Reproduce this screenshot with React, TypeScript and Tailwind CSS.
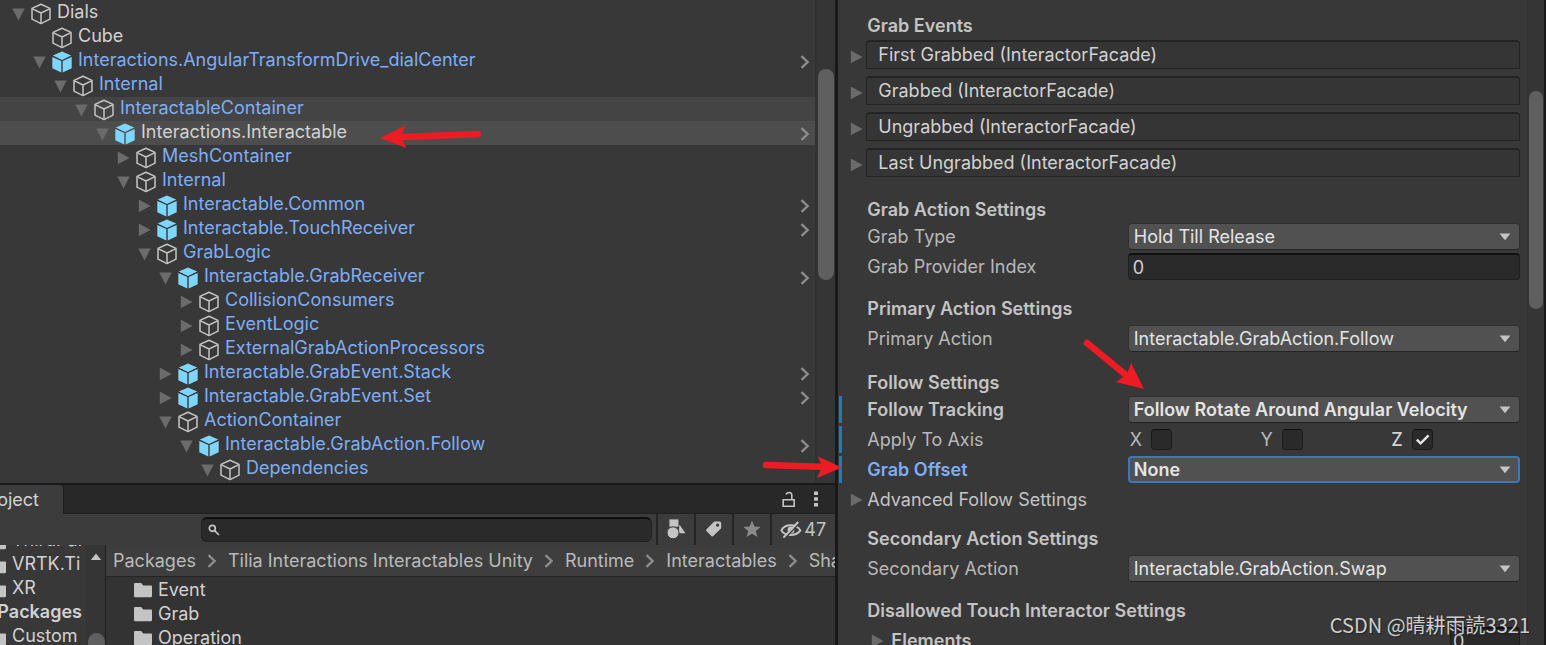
import React from 'react';

type TreeNode = {
	name: string;
	depth: number;
	icon: 'cube' | 'prefab';
	fold?: 'open' | 'closed';
	plain?: boolean;
	enter?: boolean;
	row?: string;
};

const nodes: TreeNode[] = [
	{ name: 'Dials', depth: 0, icon: 'cube', fold: 'open', plain: true },
	{ name: 'Cube', depth: 1, icon: 'cube', plain: true },
	{ name: 'Interactions.AngularTransformDrive_dialCenter', depth: 1, icon: 'prefab', fold: 'open', enter: true },
	{ name: 'Internal', depth: 2, icon: 'cube', fold: 'open' },
	{ name: 'InteractableContainer', depth: 3, icon: 'cube', fold: 'open', row: 'bg-[#444444]' },
	{ name: 'Interactions.Interactable', depth: 4, icon: 'prefab', fold: 'open', plain: true, enter: true, row: 'bg-[#4d4d4d]' },
	{ name: 'MeshContainer', depth: 5, icon: 'cube', fold: 'closed' },
	{ name: 'Internal', depth: 5, icon: 'cube', fold: 'open' },
	{ name: 'Interactable.Common', depth: 6, icon: 'prefab', fold: 'closed', enter: true },
	{ name: 'Interactable.TouchReceiver', depth: 6, icon: 'prefab', fold: 'closed', enter: true },
	{ name: 'GrabLogic', depth: 6, icon: 'cube', fold: 'open' },
	{ name: 'Interactable.GrabReceiver', depth: 7, icon: 'prefab', fold: 'open', enter: true },
	{ name: 'CollisionConsumers', depth: 8, icon: 'cube', fold: 'closed' },
	{ name: 'EventLogic', depth: 8, icon: 'cube', fold: 'closed' },
	{ name: 'ExternalGrabActionProcessors', depth: 8, icon: 'cube', fold: 'closed' },
	{ name: 'Interactable.GrabEvent.Stack', depth: 7, icon: 'prefab', fold: 'closed', enter: true },
	{ name: 'Interactable.GrabEvent.Set', depth: 7, icon: 'prefab', fold: 'closed', enter: true },
	{ name: 'ActionContainer', depth: 7, icon: 'cube', fold: 'open' },
	{ name: 'Interactable.GrabAction.Follow', depth: 8, icon: 'prefab', fold: 'open', enter: true },
	{ name: 'Dependencies', depth: 9, icon: 'cube', fold: 'open' },
];

const FoldIcon = ({ open }: { open?: boolean }) => (
	<svg width="13" height="14" viewBox="0 0 13 14" fill="#6b6b6b" className="block">
		{open ? <path d="M0.3 1.5h12.4L6.5 13.5z" /> : <path d="M0.8 0.6v12.6L12.6 6.9z" />}
	</svg>
);

const CubeIcon = () => (
	<svg width="20" height="22" viewBox="0 0 20 22" fill="none" stroke="#c4c4c4" strokeWidth="1.5" strokeLinejoin="round" className="block shrink-0">
		<path d="M10 1.2L19 5.4v10.8L10 20.6L1 16.2V5.4z" />
		<path d="M1 5.6L10 10l9-4.4M10 10v10.4" />
	</svg>
);

const PrefabIcon = () => (
	<svg width="20" height="22" viewBox="0 0 20 22" fill="#7fd6fd" className="block shrink-0">
		<path d="M10 0.6L19.2 4.6L10 8.9L0.8 4.6z" />
		<path d="M0.3 5.9L9.3 10.1v11.3L0.3 17.3z" />
		<path d="M19.7 5.9L10.7 10.1v11.3l9-4.1z" />
	</svg>
);

const Chevron = () => (
	<svg width="10" height="14" viewBox="0 0 10 14" fill="none" stroke="#8c8c8c" strokeWidth="2.4" className="block shrink-0">
		<path d="M1.5 1.2L7.6 7L1.5 12.8" />
	</svg>
);

const FolderIcon = () => (
	<svg width="18" height="16" viewBox="0 0 18 16" fill="#c4c4c4" className="block shrink-0">
		<path d="M1 1h6.2l2 2.500H17a1 1 0 0 1 1 1V14a1.2 1.2 0 0 1-1.2 1.2H1.2A1.2 1.2 0 0 1 0 14V2a1 1 0 0 1 1-1z" />
	</svg>
);

const Hierarchy = () => (
	<div className="flex shrink-0 border-b-2 border-[#191919]">
		<ul className="min-w-0 flex-1 pt-px pb-0.5">
			{nodes.map((node, i) => (
				<li
					key={i}
					className={`flex h-6 items-center pr-[5px] ${node.row ?? ''}`}
					style={{ paddingLeft: 12 + node.depth * 21 }}
				>
					<button aria-label={`Toggle ${node.name}`} className="mr-1.5 w-[13px] shrink-0 pt-0.5">
						{node.fold && <FoldIcon open={node.fold === 'open'} />}
					</button>
					<span className="pt-px">{node.icon === 'cube' ? <CubeIcon /> : <PrefabIcon />}</span>
					<span className={`ml-1.5 flex-1 pb-0.5 whitespace-nowrap ${node.plain ? 'text-[#d2d2d2]' : 'text-[#7fadf5]'}`}>
						{node.name}
					</span>
					{node.enter && (
						<button aria-label={`Open ${node.name}`} className="pt-0.5">
							<Chevron />
						</button>
					)}
				</li>
			))}
		</ul>
		<div className="w-5 border-l-2 border-[#323232] bg-[#353535] px-px pt-[69px]">
			<div className="h-[211px] rounded-full bg-[#5f5f5f]" />
		</div>
	</div>
);

const ToolButton = ({ label, children }: { label: string; children: React.ReactNode }) => (
	<button aria-label={label} className="flex w-[38px] items-center justify-center border-l-2 border-[#242424] pb-0.5">
		{children}
	</button>
);

const crumbs = ['Packages', 'Tilia Interactions Interactables Unity', 'Runtime', 'Interactables', 'Sha'];
const treeFolders = ['ThirdPar', 'VRTK.Ti', 'XR', 'Packages', 'Custom'];
const folders = ['Event', 'Grab', 'Operation'];

const Project = () => (
	<div className="flex min-h-0 flex-1 flex-col overflow-hidden">
		{/* Tab bar */}
		<div className="flex h-[29px] shrink-0 bg-[#282828]">
			<div className="flex w-[63px] items-center justify-end overflow-hidden rounded-tr bg-[#3c3c3c] pr-6 text-[#d2d2d2]">
				<span>Project</span>
			</div>
			<div className="flex flex-1 items-center justify-end gap-[18px] border-b border-l border-[#1f1f1f] pr-[17px]">
				<button aria-label="Lock">
					<svg width="14" height="17" viewBox="0 0 14 17" fill="none" stroke="#c4c4c4" strokeWidth="1.6" className="block">
						<path d="M1.2 8.8h11v6.4H1.2zM9.8 8.6V4.2C9.8 0.6 5 0.8 4.2 3.6" />
					</svg>
				</button>
				<button aria-label="More">
					<svg width="4" height="16" viewBox="0 0 4 16" fill="#c4c4c4" className="block">
						<path d="M0 0.5h4v3.4H0zM0 6.3h4v3.4H0zM0 12.1h4v3.4H0z" />
					</svg>
				</button>
			</div>
		</div>

		{/* Search and filters */}
		<div className="flex h-[31px] shrink-0 bg-[#3c3c3c] pl-[201px]">
			<label className="my-[3px] flex min-w-0 flex-1 items-center rounded-md border border-t-2 border-[#202020] border-t-[#101010] bg-[#2a2a2a] pl-1.5">
				<svg width="12" height="12" viewBox="0 0 12 12" fill="none" stroke="#c4c4c4" strokeWidth="1.7">
					<circle cx="4.3" cy="4.3" r="3" />
					<path d="M6.6 6.6L11 11" />
				</svg>
				<input type="text" aria-label="Search assets" className="min-w-0 flex-1 bg-transparent px-1 text-[#d2d2d2] outline-none" />
			</label>
			<div className="ml-1 flex">
				<ToolButton label="Filter by type">
					<svg width="20" height="20" viewBox="0 0 20 20" fill="#c4c4c4">
						<path d="M3.4 0.4h9v7.4h-9z" />
						<path d="M13.4 5.6L19.4 14.2h-6.6z" />
						<circle cx="7" cy="13.8" r="6" stroke="#3c3c3c" strokeWidth="1" />
					</svg>
				</ToolButton>
				<ToolButton label="Filter by label">
					<svg width="18" height="18" viewBox="0 0 18 18" fill="#c4c4c4">
						<path fillRule="evenodd" d="M9.2 1.6h5.4a1.6 1.6 0 0 1 1.6 1.6v5L8 16.2a1 1 0 0 1-1.4 0L1.4 11a1 1 0 0 1 0-1.4zM12.6 3.6a1.6 1.6 0 1 0 0.01 0z" />
					</svg>
				</ToolButton>
				<ToolButton label="Favorites">
					<svg width="18" height="18" viewBox="0 0 18 18" fill="#8a8a8a">
						<path d="M9 0.6l2.4 5.8 6.2 0.5-4.8 4 1.6 6.2L9 13.8l-5.4 3.3 1.6-6.2-4.8-4 6.2-0.5z" />
					</svg>
				</ToolButton>
				<button aria-label="Hidden packages" className="flex w-[65px] items-center gap-0.5 border-l-2 border-[#242424] pl-2 text-[#c4c4c4]">
					<svg width="22" height="18" viewBox="0 0 22 18" fill="none" stroke="#c4c4c4" strokeWidth="2" className="shrink-0">
						<path d="M1.4 9.4C4.6 2.6 16.4 2.6 20.4 9.4C16.4 15.4 4.6 15.4 1.4 9.4z" />
						<circle cx="11" cy="9" r="3.4" fill="#c4c4c4" stroke="none" />
						<path d="M4.6 17.6L19.6 2" stroke="#3c3c3c" strokeWidth="1.6" />
						<path d="M3.4 16.6L18.2 1" />
					</svg>
					<span>47</span>
				</button>
			</div>
		</div>

		<div className="flex min-h-0 flex-1">
			{/* Folder tree */}
			<div className="flex w-[106px] shrink-0 overflow-hidden border-r border-[#1f1f1f] bg-[#383838]">
				<ul className="-mt-[17px] w-[82px] overflow-hidden text-[#d2d2d2]">
					{treeFolders.map((name) =>
						name === 'Packages' ? (
							<li key={name} className="flex h-6 items-center justify-end font-semibold">{name}</li>
						) : (
							<li key={name} className="flex h-6 items-center">
								<span className="flex w-1.5 shrink-0 justify-end overflow-hidden pt-1"><FolderIcon /></span>
								<span className="pl-1.5 whitespace-nowrap">{name}</span>
							</li>
						),
					)}
				</ul>
				<div className="ml-auto flex w-[19px] flex-col justify-between bg-[#353535] pt-2 pl-0.5">
					<svg width="16" height="8" viewBox="0 0 16 8" fill="#c4c4c4">
						<path d="M8 0.4L13.2 7H2.8z" />
					</svg>
					<div className="h-3 rounded-t-full bg-[#5f5f5f]" />
				</div>
			</div>

			{/* Folder contents */}
			<div className="flex min-w-0 flex-1 flex-col overflow-hidden bg-[#333333]">
				<nav className="flex h-8 shrink-0 items-center gap-[11px] border-b border-[#242424] bg-[#3e3e3e] pl-[7px] text-[#bababa]">
					{crumbs.map((crumb, i) => (
						<React.Fragment key={crumb}>
							{i > 0 && <Chevron />}
							<a href="#" className="whitespace-nowrap">{crumb}</a>
						</React.Fragment>
					))}
				</nav>
				<ul className="pt-px pl-7 text-[#d2d2d2]">
					{folders.map((name) => (
						<li key={name} className="flex h-6 items-center gap-1.5">
							<FolderIcon />
							{name}
						</li>
					))}
				</ul>
			</div>
		</div>
	</div>
);

const Row = ({ id, label, tone = 'text-[#b8b8b8]', overridden, children }: {
	id?: string;
	label: string;
	tone?: string;
	overridden?: boolean;
	children?: React.ReactNode;
}) => (
	<div className="flex h-[30px] items-start pt-px">
		<div className="flex w-7 shrink-0 pl-px">
			{overridden && <div className="h-[27px] w-[3px] bg-[#1380c3]" />}
		</div>
		<div className="grid min-w-0 flex-1 grid-cols-[2fr_3fr] items-start">
			<label htmlFor={id} className={`pl-px leading-7 ${tone}`}>{label}</label>
			{children}
		</div>
	</div>
);

const Select = ({ id, value, bold, focused }: { id: string; value: string; bold?: boolean; focused?: boolean }) => (
	<div className="relative">
		<select
			id={id}
			className={`block h-[27px] w-full appearance-none rounded bg-[#515151] text-[#e4e4e4] outline-none
				${bold ? 'font-semibold' : ''}
				${focused ? 'border-2 border-[#3a79bb] pl-1' : 'border border-[#303030] border-b-[#242424] pl-[5px]'}`}
		>
			<option>{value}</option>
		</select>
		<svg width="12" height="8" viewBox="0 0 12 8" fill="#c4c4c4" className="pointer-events-none absolute top-2.5 right-[9px]">
			<path d="M0.6 0.6h10.800L6 7.2z" />
		</svg>
	</div>
);

const Heading = ({ className, children }: { className: string; children: React.ReactNode }) => (
	<h2 className={`flex items-center pl-[29px] font-semibold text-[#c4c4c4] ${className}`}>{children}</h2>
);

const Axis = ({ name, checked }: { name: string; checked?: boolean }) => (
	<label className={`flex h-[27px] items-center ${checked ? 'font-medium text-[#d2d2d2]' : ''}`}>
		<span className="w-[23px] pl-0.5">{name}</span>
		<span className="relative">
			<input
				type="checkbox"
				defaultChecked={checked}
				className="peer block h-[21px] w-[21px] appearance-none rounded border border-[#1c1c1c] border-t-[#101010] bg-[#2a2a2a]"
			/>
			<svg
				width="21"
				height="21"
				viewBox="0 0 21 21"
				fill="none"
				stroke="#e4e4e4"
				strokeWidth="2.4"
				className="pointer-events-none absolute inset-0 hidden peer-checked:block"
			>
				<path d="M4.8 10.6l3.8 3.8l8-8" />
			</svg>
		</span>
	</label>
);

const events = ['First Grabbed', 'Grabbed', 'Ungrabbed', 'Last Ungrabbed'];

const Inspector = () => (
	<div className="flex min-w-0 flex-[708] overflow-hidden border-r-2 border-[#191919]">
		<div className="min-w-0 flex-1 pt-[11px] pr-[7px]">
			<Heading className="h-[29px]">Grab Events</Heading>
			<div className="space-y-[7px]">
				{events.map((name) => (
					<div key={name} className="flex">
						<button aria-label={`Toggle ${name}`} className="flex w-7 shrink-0 items-center justify-end pt-1 pr-[3px]">
							<FoldIcon />
						</button>
						<div className="flex h-[29px] flex-1 items-center rounded-t border border-t-2 border-[#242424] bg-[#353535] pl-[11px] text-[#d2d2d2]">
							{name} (InteractorFacade)
						</div>
					</div>
				))}
			</div>

			<Heading className="mt-[21px] h-6">Grab Action Settings</Heading>
			<Row id="grab-type" label="Grab Type">
				<Select id="grab-type" value="Hold Till Release" />
			</Row>
			<Row id="grab-index" label="Grab Provider Index">
				<input
					id="grab-index"
					type="text"
					defaultValue="0"
					className="h-[27px] w-full rounded border border-t-2 border-[#202020] border-t-[#101010] bg-[#2a2a2a] px-1 text-[#d2d2d2] outline-none"
				/>
			</Row>

			<Heading className="mt-3 h-[30px]">Primary Action Settings</Heading>
			<Row id="primary" label="Primary Action">
				<Select id="primary" value="Interactable.GrabAction.Follow" />
			</Row>

			<Heading className="mt-[17px] h-6">Follow Settings</Heading>
			<Row id="tracking" label="Follow Tracking" tone="font-semibold text-[#c4c4c4]" overridden>
				<Select id="tracking" value="Follow Rotate Around Angular Velocity" bold />
			</Row>
			<Row label="Apply To Axis" overridden>
				<div className="grid grid-cols-3 text-[#b8b8b8]">
					<Axis name="X" />
					<Axis name="Y" />
					<Axis name="Z" checked />
				</div>
			</Row>
			<Row id="offset" label="Grab Offset" tone="font-semibold text-[#7fadf5]" overridden>
				<Select id="offset" value="None" bold focused />
			</Row>
			<button className="flex h-[30px] items-center text-[#c4c4c4]">
				<span className="mr-px flex w-7 justify-end pr-[3px]"><FoldIcon /></span>
				Advanced Follow Settings
			</button>

			<Heading className="mt-[9px] h-[30px]">Secondary Action Settings</Heading>
			<Row id="secondary" label="Secondary Action">
				<Select id="secondary" value="Interactable.GrabAction.Swap" />
			</Row>

			<Heading className="mt-3 h-[30px]">Disallowed Touch Interactor Settings</Heading>
			<div className="flex h-[30px] items-start justify-between pt-px pl-[33px]">
				<button className="flex items-center gap-[7px] font-semibold text-[#c4c4c4] leading-7">
					<FoldIcon />
					Elements
				</button>
				<input
					type="text"
					aria-label="Element count"
					defaultValue="0"
					className="h-[27px] w-[70px] rounded border border-t-2 border-[#202020] border-t-[#101010] bg-[#2a2a2a] px-0.5 text-[#d2d2d2] outline-none"
				/>
			</div>
		</div>
		<div className="w-[17px] shrink-0 border-l border-[#303030] bg-[#353535] px-px pt-[91px]">
			<div className="h-[218px] rounded-full bg-[#5f5f5f]" />
		</div>
	</div>
);

const Annotations = () => (
	<svg className="pointer-events-none absolute inset-0 h-full w-full" fill="#ed1c24" stroke="#ed1c24" strokeLinecap="round">
		<path d="M398 137.200L478 134" strokeWidth="6.500" />
		<path d="M380 138l25.500-12.500l-5 11.500l6 11z" stroke="none" />
		<path d="M1087 343L1126 375" strokeWidth="6.500" />
		<path d="M1144 389l-13-26l-4 11l-11 8z" stroke="none" />
		<path d="M766 465L822 466.800" strokeWidth="6.500" />
		<path d="M842 467.500l-24-11l4 10.500l-5 11z" stroke="none" />
	</svg>
);

export default function App() {
	return (
		<div className="relative flex h-screen overflow-hidden bg-[#383838] font-[Inter,sans-serif] text-[18px] leading-6">
			<div className="flex min-w-0 flex-[838] flex-col border-r-[3px] border-[#191919]">
				<Hierarchy />
				<Project />
			</div>
			<Inspector />
			<Annotations />
			<p className="pointer-events-none absolute right-4 bottom-1 font-['Noto_Sans_CJK_SC',sans-serif] text-[20px] leading-8 text-[#cfcfcf] [text-shadow:1px_1px_1px_#222222]">
				CSDN @晴耕雨読3321
			</p>
		</div>
	);
}
